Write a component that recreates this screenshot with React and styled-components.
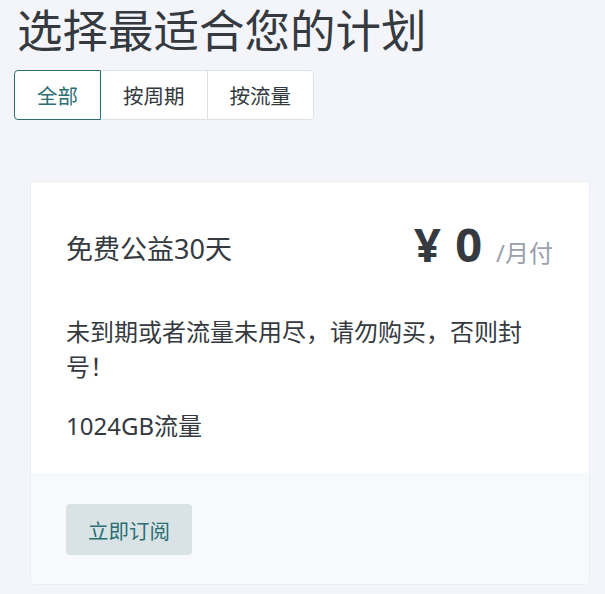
import React, { useState } from "react";
import styled, { createGlobalStyle } from "styled-components";

const GlobalStyle = createGlobalStyle`
  html, body {
    margin: 0;
    padding: 0;
    background: #f4f5fa;
    font-family: "Noto Sans", "Noto Sans CJK SC", sans-serif;
    color: #343a40;
  }
`;

const Page = styled.div`
  padding: 3px 15px 9px 14px;
`;

const Title = styled.h1`
  margin: 0 0 0 3px;
  font-size: 45.5px;
  font-weight: 400;
  line-height: 54px;
  color: #343a40;
`;

const Tabs = styled.div`
  display: inline-flex;
  margin-top: 13px;
  background: #fff;
  border-radius: 4px;
`;

const Tab = styled.button`
  height: 50px;
  padding: 0 22px;
  font-family: inherit;
  font-size: 20.5px;
  background: #fff;
  cursor: pointer;
  color: ${(p) => (p.$active ? "#2b6f74" : "#343a40")};
  border: 1px solid ${(p) => (p.$active ? "#2b6f74" : "#dee2e6")};
  margin-left: -1px;
  position: relative;
  z-index: ${(p) => (p.$active ? 1 : 0)};
  &:first-child {
    margin-left: 0;
    border-radius: 4px 0 0 4px;
  }
  &:last-child {
    border-radius: 0 4px 4px 0;
  }
`;

const CardWrap = styled.div`
  padding: 61px 0 0 16px;
`;

const Card = styled.div`
  background: #fff;
  border: 1px solid #eceef3;
  border-radius: 5px;
  overflow: hidden;
`;

const CardBody = styled.div`
  padding: 35px 36px 30px 35px;
`;

const Header = styled.div`
  display: flex;
  justify-content: space-between;
  align-items: center;
`;

const PlanName = styled.div`
  font-size: 27px;
  line-height: 55px;
`;

const Price = styled.div`
  display: flex;
  align-items: baseline;
  line-height: 55px;
`;

const Amount = styled.span`
  font-size: 47px;
  font-weight: 700;
  color: #343a40;
  word-spacing: 2px;
`;

const Period = styled.span`
  margin-left: 14px;
  font-size: 24px;
  color: #9aa0ac;
`;

const Desc = styled.p`
  margin: 34px 0 0;
  font-size: 24px;
  line-height: 35px;
`;

const Feature = styled.p`
  margin: 24px 0 0;
  font-size: 24px;
  line-height: 35px;
`;

const Footer = styled.div`
  background: #f8f9fb;
  padding: 31px 35px 29px;
`;

const Subscribe = styled.button`
  height: 51px;
  padding: 0 22px;
  border: none;
  border-radius: 4px;
  background: #d9e3e5;
  color: #2b6f74;
  font-family: inherit;
  font-size: 20.5px;
  cursor: pointer;
`;

const tabs = ["全部", "按周期", "按流量"];

export default function App() {
  const [active, setActive] = useState(0);
  return (
    <Page>
      <GlobalStyle />
      <Title>选择最适合您的计划</Title>
      <Tabs>
        {tabs.map((t, i) => (
          <Tab key={t} $active={active === i} onClick={() => setActive(i)}>
            {t}
          </Tab>
        ))}
      </Tabs>
      <CardWrap>
        <Card>
          <CardBody>
            <Header>
              <PlanName>免费公益30天</PlanName>
              <Price>
                <Amount>¥ 0</Amount>
                <Period>/月付</Period>
              </Price>
            </Header>
            <Desc>未到期或者流量未用尽，请勿购买，否则封号！</Desc>
            <Feature>1024GB流量</Feature>
          </CardBody>
          <Footer>
            <Subscribe>立即订阅</Subscribe>
          </Footer>
        </Card>
      </CardWrap>
    </Page>
  );
}
